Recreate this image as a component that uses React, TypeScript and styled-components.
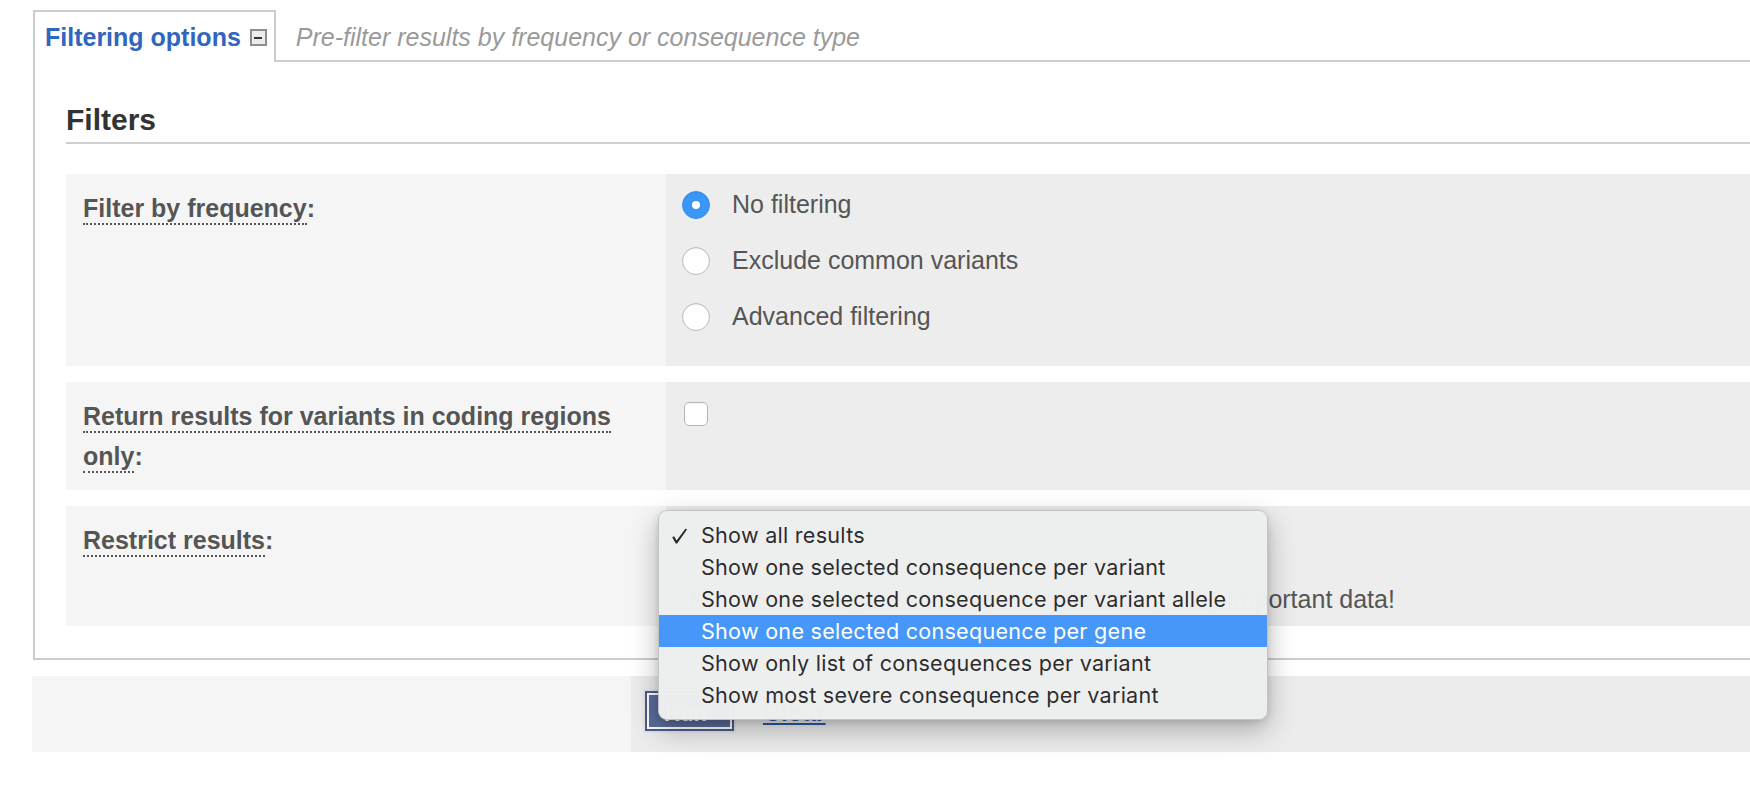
import React from "react";
import styled, { createGlobalStyle } from "styled-components";

const GlobalStyle = createGlobalStyle`
  html, body {
    margin: 0;
    padding: 0;
    background: #ffffff;
    overflow: hidden;
  }
  body {
    font-family: "Liberation Sans", Arial, Helvetica, sans-serif;
    color: #555555;
  }
  *, *::before, *::after { box-sizing: border-box; }
`;

const Page = styled.div`
  width: 1750px;
  height: 800px;
  padding-top: 10px;
  overflow: hidden;
`;

const Panel = styled.section`
  margin-left: 33px;
`;

const TabBar = styled.div`
  display: flex;
  height: 52px;
`;

const Tab = styled.div`
  display: flex;
  align-items: center;
  gap: 9px;
  border: 2px solid #cccccc;
  border-bottom: none;
  padding: 0 7px 0 10px;
  background: #ffffff;
`;

const TabTitle = styled.span`
  font-size: 25px;
  font-weight: 700;
  line-height: 50px;
  color: #3066be;
`;

const ToggleBox = styled.span`
  position: relative;
  display: block;
  width: 17px;
  height: 17px;
  border: 2px solid #8e8e8e;
  background: #ececec;
  margin-top: 1px;
  &::after {
    content: "";
    position: absolute;
    left: 2.5px;
    top: 5.5px;
    width: 8px;
    height: 2.5px;
    background: #333333;
  }
`;

const TabDesc = styled.div`
  flex: 1;
  border-bottom: 2px solid #cccccc;
  padding: 4px 0 0 20px;
  font-size: 25px;
  font-style: italic;
  line-height: 46px;
  color: #9a9a9a;
  white-space: nowrap;
`;

const PanelBody = styled.div`
  display: flow-root;
  border-left: 2px solid #cccccc;
  border-bottom: 2px solid #cccccc;
  padding: 40px 0 32px 31px;
`;

const Heading = styled.h2`
  margin: 0 0 30px;
  padding-bottom: 4px;
  border-bottom: 2px solid #cfcfcf;
  font-size: 30px;
  font-weight: 700;
  line-height: 36px;
  color: #333333;
`;

const Row = styled.div<{ $last?: boolean }>`
  display: grid;
  grid-template-columns: 600px 1fr;
  margin-bottom: ${(p) => (p.$last ? "0" : "16px")};
`;

const LabelCell = styled.div`
  background: #f5f5f5;
  padding: 14px 17px;
  font-size: 25px;
  font-weight: 700;
  line-height: 40px;
  color: #555555;
`;

const Hint = styled.span`
  border-bottom: 2px dotted #555555;
  padding-bottom: 1px;
`;

const ValueCell = styled.div`
  position: relative;
  background: #ededed;
  padding: 14px 16px;
  font-size: 25px;
  line-height: 40px;
  color: #555555;
`;

const RadioList = styled.div`
  display: flex;
  flex-direction: column;
  gap: 16px;
  margin: -4px 0 16px;
`;

const RadioOption = styled.label`
  display: flex;
  align-items: center;
  gap: 22px;
  height: 40px;
`;

const Radio = styled.input.attrs({ type: "radio" })`
  appearance: none;
  margin: 1px 0 0;
  width: 28px;
  height: 28px;
  border-radius: 50%;
  background: #ffffff;
  border: 1px solid #b9b9b9;
  box-shadow: inset 0 1px 1px rgba(0, 0, 0, 0.06);
  position: relative;
  &:checked {
    background: #3a96f7;
    border-color: #3a8ff0;
  }
  &:checked::after {
    content: "";
    position: absolute;
    left: 50%;
    top: 50%;
    width: 8px;
    height: 8px;
    margin: -4px 0 0 -4px;
    border-radius: 50%;
    background: #ffffff;
  }
`;

const Checkbox = styled.input.attrs({ type: "checkbox" })`
  appearance: none;
  display: block;
  margin: 6px 0 0 2px;
  width: 24px;
  height: 24px;
  border-radius: 5px;
  background: #ffffff;
  border: 1px solid #b5b5b5;
  box-shadow: inset 0 1px 1px rgba(0, 0, 0, 0.05);
`;

const SelectBox = styled.div`
  height: 44px;
  width: 560px;
  margin: 0 0 22px 2px;
  border-radius: 6px;
  background: #ffffff;
  border: 1px solid #c4c4c4;
`;

const Note = styled.div`
  line-height: 26px;
  padding-left: 7px;
  white-space: nowrap;
`;

const Menu = styled.ul`
  position: absolute;
  left: -8px;
  top: 4px;
  z-index: 10;
  width: 610px;
  margin: 0;
  padding: 8px 0;
  list-style: none;
  border-radius: 9px;
  background: rgba(237, 238, 238, 0.99);
  border: 1px solid rgba(0, 0, 0, 0.18);
  box-shadow: 0 10px 28px rgba(0, 0, 0, 0.28), 0 2px 6px rgba(0, 0, 0, 0.12);
  font-family: Inter, "Noto Sans", sans-serif;
  font-size: 21.6px;
  letter-spacing: 0.25px;
`;

const MenuItem = styled.li<{ $active?: boolean }>`
  position: relative;
  height: 32px;
  line-height: 32px;
  padding-left: 42px;
  white-space: nowrap;
  color: ${(p) => (p.$active ? "#ffffff" : "rgba(0, 0, 0, 0.84)")};
  background: ${(p) => (p.$active ? "#4797f9" : "transparent")};
`;

const Check = styled.svg`
  position: absolute;
  left: 12px;
  top: 9px;
  width: 17px;
  height: 16px;
`;

const Footer = styled.div`
  display: grid;
  grid-template-columns: 599px 1fr;
  height: 76px;
  margin: 16px 0 0 32px;
`;

const FooterSpacer = styled.div`
  background: #f5f5f5;
`;

const FooterActions = styled.div`
  display: flex;
  align-items: flex-start;
  gap: 31px;
  padding: 17px 0 0 16px;
  background: #ececec;
`;

const RunButton = styled.button`
  width: 85px;
  height: 36px;
  border: 2px solid #ffffff;
  background: #5b6c9a;
  box-shadow: 0 0 0 2px #4a5c8c, 0 0 0 4px #e3e4ea;
  color: #ffffff;
  font-family: "Liberation Sans", Arial, sans-serif;
  font-size: 22px;
  font-weight: 700;
  line-height: 26px;
  padding: 6px 8px 0 0;
  margin: 0;
`;

const ClearLink = styled.a`
  font-size: 25px;
  font-weight: 700;
  line-height: 38px;
  color: #2c5aa3;
  text-decoration: underline;
  text-underline-offset: 2px;
`;

const frequencyOptions = ["No filtering", "Exclude common variants", "Advanced filtering"];

const restrictOptions = [
  "Show all results",
  "Show one selected consequence per variant",
  "Show one selected consequence per variant allele",
  "Show one selected consequence per gene",
  "Show only list of consequences per variant",
  "Show most severe consequence per variant",
];

export default function App() {
  return (
    <>
      <GlobalStyle />
      <Page>
        <Panel>
          <TabBar>
            <Tab>
              <TabTitle>Filtering options</TabTitle>
              <ToggleBox />
            </Tab>
            <TabDesc>Pre-filter results by frequency or consequence type</TabDesc>
          </TabBar>
          <PanelBody>
            <Heading>Filters</Heading>

            <Row>
              <LabelCell>
                <Hint>Filter by frequency</Hint>:
              </LabelCell>
              <ValueCell>
                <RadioList>
                  {frequencyOptions.map((o, i) => (
                    <RadioOption key={o}>
                      <Radio name="freq" defaultChecked={i === 0} />
                      <span>{o}</span>
                    </RadioOption>
                  ))}
                </RadioList>
              </ValueCell>
            </Row>

            <Row>
              <LabelCell>
                <Hint>Return results for variants in coding regions only</Hint>:
              </LabelCell>
              <ValueCell>
                <Checkbox />
              </ValueCell>
            </Row>

            <Row $last>
              <LabelCell>
                <Hint>Restrict results</Hint>:
              </LabelCell>
              <ValueCell>
                <SelectBox />
                <Note>Note: restricting results may exclude biologically important data!</Note>
                <Menu>
                  {restrictOptions.map((o, i) => (
                    <MenuItem key={o} $active={i === 3}>
                      {i === 0 && (
                        <Check viewBox="0 0 17 16" aria-hidden="true">
                          <path
                            d="M1.2 9.2 L3.2 8.2 L5.6 12.4 L14.6 0.6 L16 1.4 L6.2 15.4 L4.8 15.4 Z"
                            fill="#2a2a2a"
                          />
                        </Check>
                      )}
                      {o}
                    </MenuItem>
                  ))}
                </Menu>
              </ValueCell>
            </Row>
          </PanelBody>
        </Panel>

        <Footer>
          <FooterSpacer />
          <FooterActions>
            <RunButton>Run</RunButton>
            <ClearLink href="#">Clear</ClearLink>
          </FooterActions>
        </Footer>
      </Page>
    </>
  );
}
